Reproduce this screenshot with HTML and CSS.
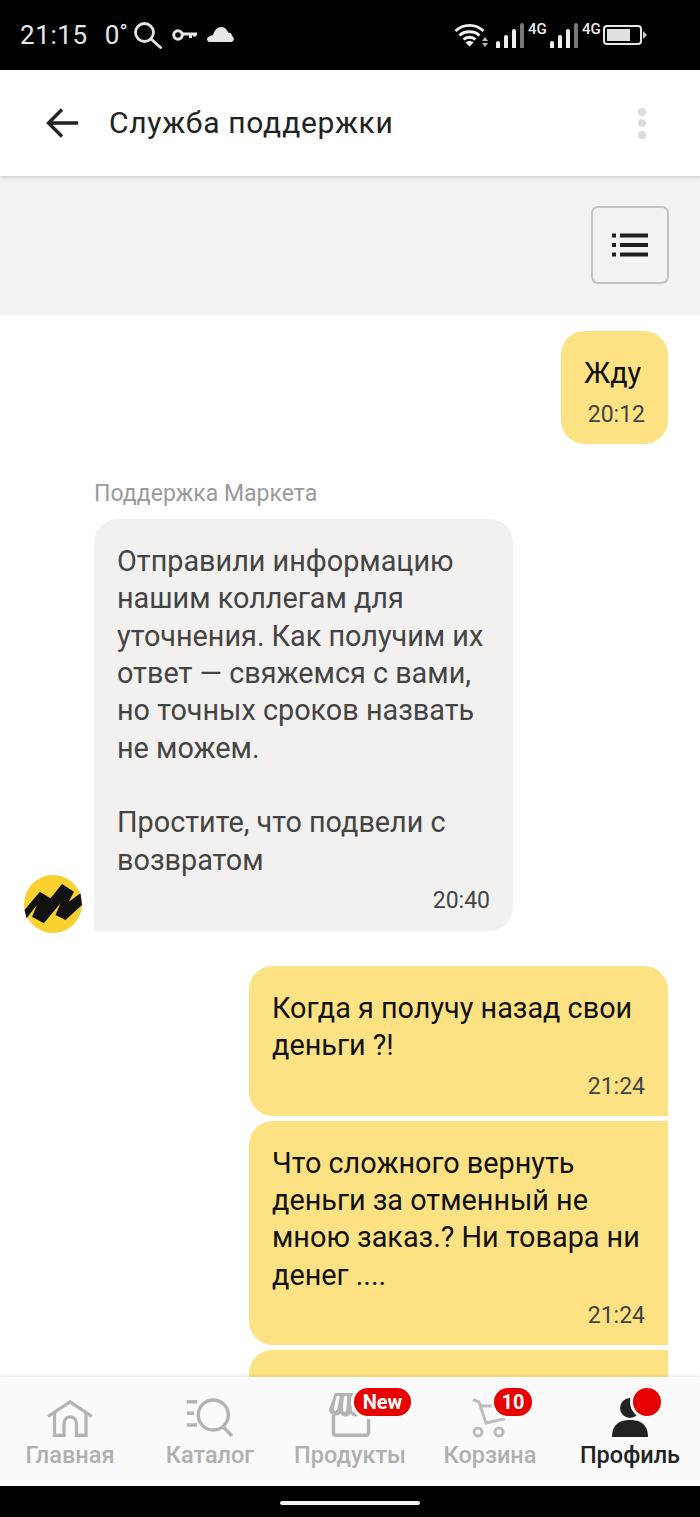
FILE: index.html
```html
<!DOCTYPE html>
<html lang="ru">
<head>
  <meta charset="UTF-8" />
  <meta name="viewport" content="width=device-width, initial-scale=1" />
  <title>Служба поддержки</title>
  <link rel="stylesheet" href="styles.css">
</head>
<body>
  <!-- Android status bar -->
  <div class="status-bar">
    <div class="status-left">
      <span class="clock">21:15</span>
      <span class="temp">0<span class="deg">°</span></span>
      <svg class="st-search" width="28" height="27" viewBox="0 0 28 27" fill="none" stroke="#e6e6e6" stroke-width="2.800"><circle cx="10.500" cy="10.500" r="9"/><path d="M17 17l9.500 8.500" stroke-linecap="round"/></svg>
      <svg class="st-key" width="25" height="14" viewBox="0 0 25 14" fill="none" stroke="#e6e6e6"><circle cx="6" cy="7" r="4.300" stroke-width="3"/><path d="M10 6h15M18.500 6v4M22.500 6v2.500" stroke-width="3"/></svg>
      <svg class="st-cloud" width="27" height="15" viewBox="0 0 27 15" fill="#e6e6e6"><path d="M2.500 15C-.5 15-1 10 2.500 9.500 3.500 8.500 5 8 6 8.200 7.500 3 10.500 0 14 0c3.500 0 6 2 7 5.500 2.500-.2 4 1.500 4 3.500 2 .8 3 5-.5 6z"/></svg>
    </div>
    <div class="status-right">
      <svg class="st-wifi" width="31" height="24" viewBox="0 0 31 24" fill="none" stroke="#f0f0f0" stroke-width="2.800"><path d="M1.500 8c7.500-7.500 20.500-7.500 28 0M5.500 12.500c5-5 15-5 20 0M9.500 16.500c3-3 9-3 12 0"/><path d="M15.500 23.500l-4-4c2-2 6-2 8 0z" fill="#f0f0f0" stroke="none"/></svg>
      <svg class="st-updown" width="6" height="10" viewBox="0 0 6 10" fill="#bdbdbd"><path d="M3 0l3 4H0zM3 10L0 6h6z"/></svg>
      <div class="signal"><i class="b1"></i><i class="b2"></i><i class="b3"></i><i class="b4"></i></div>
      <span class="net">4G</span>
      <div class="signal signal-second"><i class="b1"></i><i class="b2"></i><i class="b3"></i><i class="b4"></i></div>
      <span class="net">4G</span>
      <div class="battery"><div class="battery-level"></div></div>
      <div class="battery-tip"></div>
    </div>
  </div>

  <!-- Page header -->
  <header class="app-header">
    <svg class="back" width="32" height="30" viewBox="0 0 32 30" fill="none" stroke="#222" stroke-width="3.400"><path d="M16 1.500L2.500 15 16 28.500M3 15h29"/></svg>
    <h1>Служба поддержки</h1>
    <div class="more"><i></i><i></i><i></i></div>
  </header>

  <div class="toolbar">
    <button class="list-btn">
      <svg width="36" height="24" viewBox="0 0 36 24" fill="#1f1f1f"><path d="M0 .5h4v4H0zM8 .5h28v4H8zM0 10h4v4H0zM8 10h28v4H8zM0 19.500h4v4H0zM8 19.500h28v4H8z"/></svg>
    </button>
  </div>

  <!-- Messages -->
  <main class="chat">
    <div class="msg msg-me bubble-single">
      <p>Жду</p>
      <time>20:12</time>
    </div>

    <div class="incoming">
      <svg class="avatar" width="58" height="58" viewBox="0 0 58 58">
        <circle cx="29" cy="29" r="29" fill="#fbd12f"/>
        <path d="M.5 35L15.800 16.700l10.700 6.600L38 9l12 7.700-5.200 10 11.700-8.400L58 30 41.500 45l-10-5 5-11.700L19.800 48.300 8 41.700 13 30 2.500 43.300z" fill="#111"/>
      </svg>
      <div class="incoming-body">
        <div class="sender">Поддержка Маркета</div>
        <div class="msg msg-them">
          <p>Отправили информацию нашим коллегам для уточнения. Как получим их ответ — свяжемся с вами, но точных сроков назвать не можем.<br><br>Простите, что подвели с возвратом</p>
          <time>20:40</time>
        </div>
      </div>
    </div>

    <div class="group">
      <div class="msg msg-me bubble-first">
        <p>Когда я получу назад свои деньги ?!</p>
        <time>21:24</time>
      </div>
      <div class="msg msg-me bubble-mid">
        <p>Что сложного вернуть деньги за отменный не мною заказ.? Ни товара ни денег ....</p>
        <time>21:24</time>
      </div>
      <!-- cut off by the tab bar, only its top edge shows -->
      <div class="msg msg-me bubble-mid bubble-cut"></div>
    </div>
  </main>

  <!-- Bottom tabs -->
  <nav class="tabbar">
    <a class="tab">
      <svg width="46" height="37" viewBox="0 0 46 37" fill="none" stroke="#b3b3b3" stroke-width="3.200"><path d="M1 16.500L23 1.800l22 14.700"/><path d="M7.500 12v23.400H17V24c0-9.500 12.500-9.500 12.500 0v11.400h9.500V12"/></svg>
      <span>Главная</span>
    </a>
    <a class="tab">
      <svg width="46" height="39" viewBox="0 0 46 39" fill="none" stroke="#b3b3b3" stroke-width="3.400"><path d="M0 3.700h10M0 15.300h7M0 27h10"/><circle cx="26.300" cy="17" r="15"/><path d="M36 28.500l9 9.500"/></svg>
      <span>Каталог</span>
    </a>
    <a class="tab">
      <svg width="42" height="44" viewBox="0 0 42 44" fill="none" stroke="#b3b3b3" stroke-width="3.400"><path d="M4.500 22v17.500c0 1.500 1 2.800 2.800 2.800h29.500c1.500 0 2.800-1.300 2.800-2.800V24"/><path d="M6 0h30l6 16c0 7-7.500 8-10.500 4-2 4.500-7.500 4.500-10 .5-2 4-7.500 4-10 0C9 24 0 23 0 16z" fill="#b3b3b3" stroke="none"/><path d="M9 4.500L6.500 16M16.500 4.500L15.500 17M24 4.500l.5 12.500" stroke="#fafafa" stroke-width="3.500" stroke-linecap="round"/></svg>
      <b class="badge badge-new">New</b>
      <span>Продукты</span>
    </a>
    <a class="tab tab-cart">
      <svg width="36" height="40" viewBox="0 0 36 40" fill="none" stroke="#bdbdbd" stroke-width="3"><path d="M1 1.500l6 2.500 7 21 18-4 3-9"/><path d="M9 8h17"/><circle cx="6" cy="34" r="4"/><circle cx="27" cy="34" r="4"/></svg>
      <b class="badge badge-count">10</b>
      <span>Корзина</span>
    </a>
    <a class="tab tab-active">
      <svg width="36" height="39" viewBox="0 0 36 39" fill="#222"><path d="M0 39c0-13 8-17 18-17s18 4 18 17z"/><circle cx="18" cy="10" r="10"/></svg>
      <b class="dot"></b>
      <span>Профиль</span>
    </a>
  </nav>

  <!-- Gesture bar -->
  <div class="gesture-bar"><div class="gesture-pill"></div></div>
</body>
</html>
```

FILE: styles.css
```css
/* Reset */
* {
  margin: 0;
  padding: 0;
  box-sizing: border-box;
}
html, body {
  width: 100%;
  height: 100%;
  overflow: hidden;
  font-family: Roboto, "Noto Sans", Arial, sans-serif;
}
body {
  display: flex;
  flex-direction: column;
  height: 1517px;
  background: #fff;
}
/* Status bar */
.status-bar {
  flex: 0 0 70px;
  background: #000;
  color: #e8e8e8;
  display: flex;
  align-items: center;
  justify-content: space-between;
  padding: 0 53px 0 20px;
}
.status-left, .status-right {
  display: flex;
  align-items: center;
}
.clock {
  font-size: 26px;
  letter-spacing: 0.6px;
}
.temp {
  font-size: 26px;
  margin-left: 17px;
}
.deg {
  font-size: 22px;
  position: relative;
  top: -4px;
}
.st-search {
  margin-left: 6px;
}
.st-key {
  margin-left: 10px;
}
.st-cloud {
  margin-left: 10px;
  position: relative;
  top: -1px;
}
.st-updown {
  margin: 13px 0 0 -3px;
}
.signal {
  display: flex;
  align-items: flex-end;
  gap: 4px;
  height: 25px;
  margin-left: 8px;
}
.signal-second {
  margin-left: 4px;
}
.signal i {
  width: 4px;
  border-radius: 2px 2px 0 0;
  background: #eee;
}
.signal .b1 { height: 7px; }
.signal .b2 { height: 13px; }
.signal .b3 { height: 19px; }
.signal .b4 { height: 25px; background: #777; }
.net {
  font-size: 15px;
  line-height: 12px;
  font-weight: 500;
  align-self: flex-start;
  margin-left: 4px;
  color: #eee;
  width: 18px;
}
.battery {
  width: 39px;
  height: 20px;
  border: 2px solid #e8e8e8;
  border-radius: 4px;
  padding: 2px;
  margin-left: 3px;
}
.battery-level {
  width: 23px;
  height: 100%;
  background: #e0e0e0;
}
.battery-tip {
  width: 0;
  height: 0;
  margin-left: 1px;
  border-left: 4px solid #ccc;
  border-top: 4px solid transparent;
  border-bottom: 4px solid transparent;
}
/* Header */
.app-header {
  flex: 0 0 106px;
  display: flex;
  align-items: center;
  padding: 0 54px 0 46px;
  background: #fff;
  box-shadow: 0 1px 4px rgba(0,0,0,0.18);
  position: relative;
  z-index: 1;
}
.app-header h1 {
  font-size: 30px;
  line-height: 34px;
  font-weight: 400;
  color: #222;
  margin: 0 0 1px 31px;
  flex: 1;
  letter-spacing: 0.7px;
}
.more {
  display: flex;
  flex-direction: column;
  gap: 3.500px;
}
.more i {
  width: 8px;
  height: 8px;
  border-radius: 50%;
  background: #dcdcdc;
}
/* Toolbar under header */
.toolbar {
  flex: 0 0 139px;
  background: #f3f2f0;
  display: flex;
  justify-content: flex-end;
  align-items: flex-start;
  padding: 30px 31px 0 0;
}
.list-btn {
  width: 78px;
  height: 78px;
  background: #f3f2f0;
  border: 2px solid #c4c3c0;
  border-radius: 7px;
  display: flex;
  align-items: center;
  justify-content: center;
}
/* Chat */
.chat {
  flex: 1;
  min-height: 0;
  overflow: hidden;
  padding: 16px 32px 0 24px;
  display: flex;
  flex-direction: column;
}
.msg {
  flex: none;
  border-radius: 24px;
  padding: 24px 23px 15px 23px;
  font-size: 28.800px;
  line-height: 37.330px;
}
.msg time {
  display: block;
  text-align: right;
  font-size: 23px;
  line-height: 28px;
  color: #444;
  margin-top: 8px;
}
.msg-me {
  background: #fde283;
  color: #111;
  align-self: flex-end;
}
.msg-them {
  background: #f2f1ef;
  color: #444;
  border-bottom-left-radius: 0;
  padding-bottom: 16px;
}
.bubble-single {
  width: 107px;
  height: 113px;
}
.bubble-single time {
  margin-top: 9px;
}
.incoming {
  display: flex;
  align-items: flex-end;
  margin-top: 37px;
}
.avatar {
  flex: 0 0 58px;
  margin-right: 12px;
  margin-bottom: -2px;
}
.incoming-body {
  width: 419px;
}
.sender {
  font-size: 23px;
  color: #9a9a9a;
  line-height: 26px;
  margin-bottom: 12px;
}
.group {
  flex: none;
  display: flex;
  flex-direction: column;
  align-items: flex-end;
  gap: 5px;
  margin-top: 35px;
}
.group .msg {
  width: 419px;
}
.bubble-first {
  border-radius: 24px 24px 0 24px;
}
.bubble-mid {
  border-radius: 24px 0 0 24px;
}
.bubble-cut {
  height: 80px;
}
/* Bottom tabs */
.tabbar {
  flex: 0 0 109px;
  background: #fafafa;
  box-shadow: 0 -1px 4px rgba(0,0,0,0.10);
  display: grid;
  grid-template-columns: repeat(5, 1fr);
  position: relative;
  z-index: 1;
}
.tab {
  position: relative;
  display: flex;
  flex-direction: column;
  align-items: center;
  justify-content: flex-end;
  padding-bottom: 17px;
  color: #b0b0b0;
}
.tab svg {
  margin-bottom: 4px;
}
.tab-cart svg {
  margin-bottom: 3px;
}
.tab span {
  font-size: 23.500px;
  line-height: 28px;
  font-weight: 500;
  white-space: nowrap;
}
.tab-active {
  color: #222;
}
.badge {
  position: absolute;
  top: 11px;
  left: 74px;
  height: 28px;
  border-radius: 14px;
  background: #e60000;
  color: #fff;
  font-size: 20px;
  font-weight: 700;
  line-height: 28px;
  text-align: center;
  box-shadow: 0 0 0 3px #fafafa;
}
.badge-new {
  width: 57px;
}
.badge-count {
  width: 38px;
}
.dot {
  position: absolute;
  top: 11px;
  left: 73px;
  width: 28px;
  height: 28px;
  border-radius: 50%;
  background: #e60000;
  box-shadow: 0 0 0 3px #fafafa;
}
/* Gesture bar */
.gesture-bar {
  flex: 0 0 31px;
  background: #000;
  display: flex;
  justify-content: center;
  padding-top: 15px;
}
.gesture-pill {
  width: 140px;
  height: 4px;
  background: #f2f2f2;
  border-radius: 2px;
}
```
